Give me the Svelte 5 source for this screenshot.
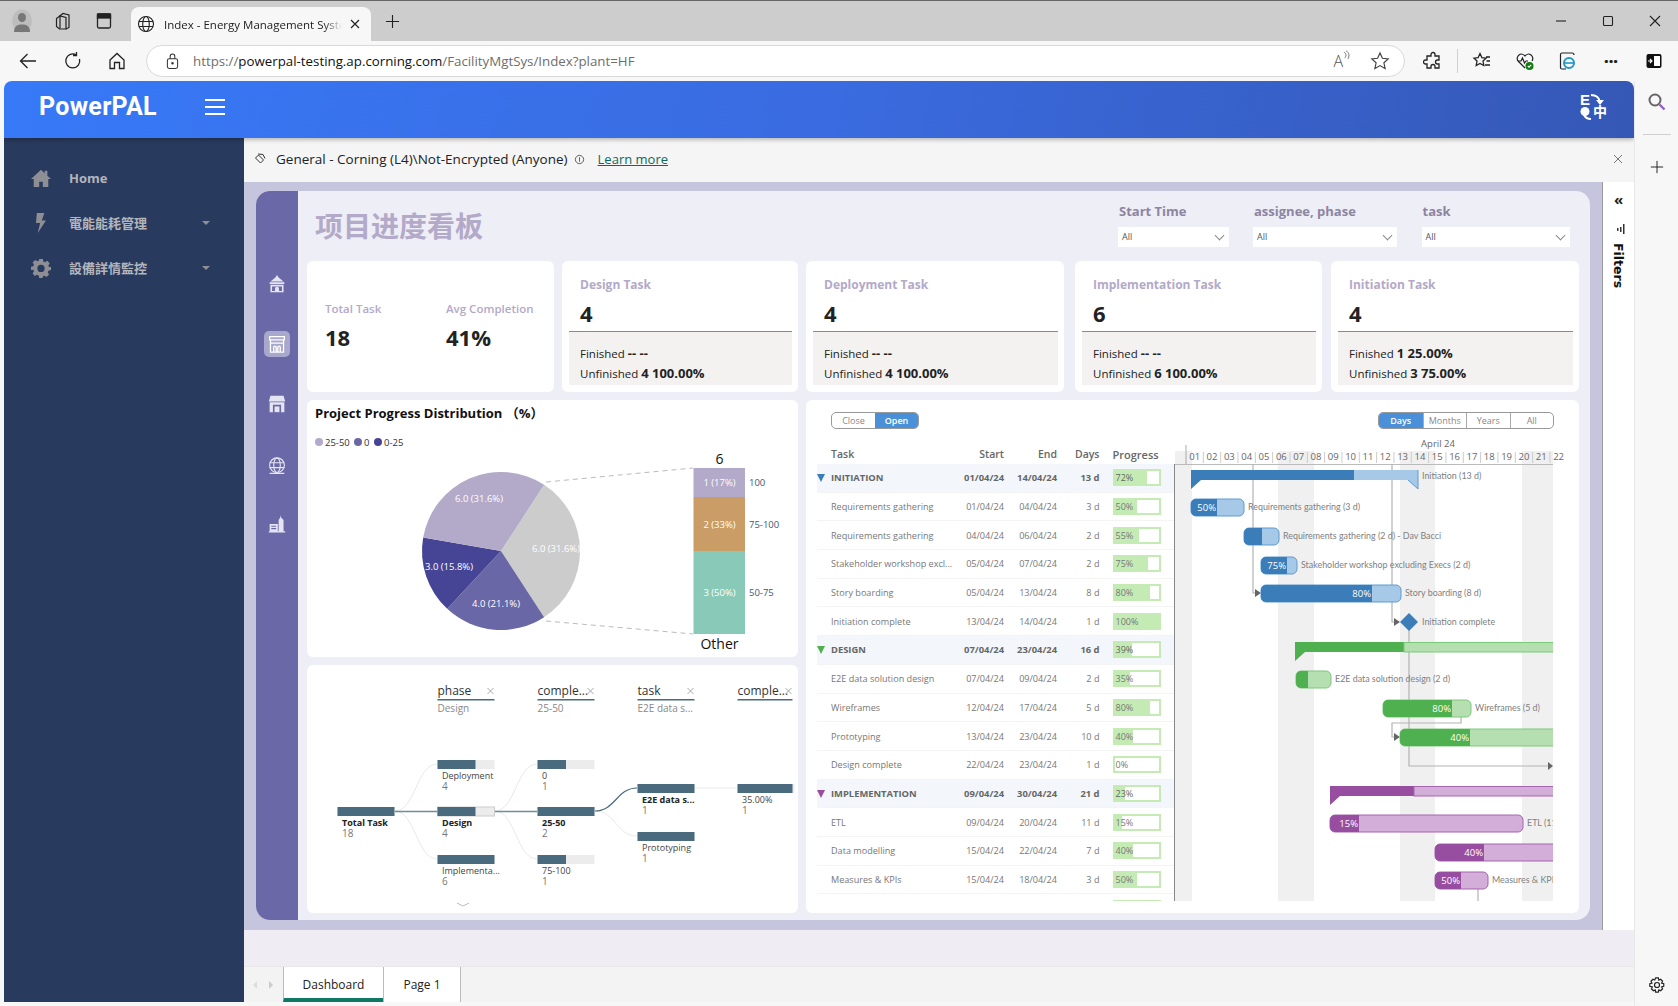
<script>
	const stats = [
		{ name: 'Design Task', total: 4, done: '-- --', open: '4 100.00%' },
		{ name: 'Deployment Task', total: 4, done: '-- --', open: '4 100.00%' },
		{ name: 'Implementation Task', total: 6, done: '-- --', open: '6 100.00%' },
		{ name: 'Initiation Task', total: 4, done: '1 25.00%', open: '3 75.00%' }
	];

	const rows = [
		{ task: 'INITIATION', start: '01/04/24', end: '14/04/24', days: '13 d', pct: 72, group: 'blue' },
		{ task: 'Requirements gathering', start: '01/04/24', end: '04/04/24', days: '3 d', pct: 50 },
		{ task: 'Requirements gathering', start: '04/04/24', end: '06/04/24', days: '2 d', pct: 55 },
		{ task: 'Stakeholder workshop excl...', start: '05/04/24', end: '07/04/24', days: '2 d', pct: 75 },
		{ task: 'Story boarding', start: '05/04/24', end: '13/04/24', days: '8 d', pct: 80 },
		{ task: 'Initiation complete', start: '13/04/24', end: '14/04/24', days: '1 d', pct: 100 },
		{ task: 'DESIGN', start: '07/04/24', end: '23/04/24', days: '16 d', pct: 39, group: 'green' },
		{ task: 'E2E data solution design', start: '07/04/24', end: '09/04/24', days: '2 d', pct: 35 },
		{ task: 'Wireframes', start: '12/04/24', end: '17/04/24', days: '5 d', pct: 80 },
		{ task: 'Prototyping', start: '13/04/24', end: '23/04/24', days: '10 d', pct: 40 },
		{ task: 'Design complete', start: '22/04/24', end: '23/04/24', days: '1 d', pct: 0 },
		{ task: 'IMPLEMENTATION', start: '09/04/24', end: '30/04/24', days: '21 d', pct: 23, group: 'purple' },
		{ task: 'ETL', start: '09/04/24', end: '20/04/24', days: '11 d', pct: 15 },
		{ task: 'Data modelling', start: '15/04/24', end: '22/04/24', days: '7 d', pct: 40 },
		{ task: 'Measures & KPIs', start: '15/04/24', end: '18/04/24', days: '3 d', pct: 50 },
		{ task: '', start: '', end: '', days: '', pct: 30 }
	];

	const blue = { dark: '#3a7db8', light: '#a5c9e6', edge: '#5d9bd3' };
	const green = { dark: '#4fb04f', light: '#b6dfb1', edge: '#7cc97a' };
	const purple = { dark: '#984ea0', light: '#d3aed9', edge: '#a765b0' };

	// chart coordinates are page pixels, the svg viewBox starts at 1174,440
	const bars = [
		{ x: 1191, x2: 1244, split: 1217, y: 499, c: blue, pct: '50%', label: 'Requirements gathering (3 d)' },
		{ x: 1244, x2: 1279, split: 1262, y: 528, c: blue, label: 'Requirements gathering (2 d) - Dav Bacci' },
		{ x: 1261, x2: 1297, split: 1287, y: 557, c: blue, pct: '75%', label: 'Stakeholder workshop excluding Execs (2 d)' },
		{ x: 1261, x2: 1401, split: 1372, y: 585, c: blue, pct: '80%', label: 'Story boarding (8 d)' },
		{ x: 1296, x2: 1331, split: 1308, y: 671, c: green, label: 'E2E data solution design (2 d)' },
		{ x: 1383, x2: 1471, split: 1452, y: 700, c: green, pct: '80%', label: 'Wireframes (5 d)' },
		{ x: 1400, x2: 1590, split: 1470, y: 729, c: green, pct: '40%' },
		{ x: 1330, x2: 1523, split: 1359, y: 815, c: purple, pct: '15%', label: 'ETL (11 d)' },
		{ x: 1435, x2: 1590, split: 1484, y: 844, c: purple, pct: '40%' },
		{ x: 1435, x2: 1488, split: 1461, y: 872, c: purple, pct: '50%', label: 'Measures & KPIs (3 d)' }
	];

	const dayW = 17.33;
	const days = Array.from({ length: 22 }, (_, i) => ({
		label: String(i + 1).padStart(2, '0'),
		x: 1186 + i * dayW
	}));
	const weekends = [
		[1175, 1192],
		[1278, 1314],
		[1400, 1435],
		[1522, 1553]
	];

	const pieC = { x: 501, y: 551, r: 79 };
	function arc(a0, a1) {
		const rad = Math.PI / 180;
		const p = (a) => `${pieC.x + pieC.r * Math.cos(a * rad)} ${pieC.y + pieC.r * Math.sin(a * rad)}`;
		return `M${pieC.x} ${pieC.y}L${p(a0)}A${pieC.r} ${pieC.r} 0 ${a1 - a0 > 180 ? 1 : 0} 1 ${p(a1)}Z`;
	}
	const slices = [
		{ d: arc(-56.9, 56.9), fill: '#cccccc', text: '6.0 (31.6%)', x: 556, y: 552 },
		{ d: arc(56.9, 132.9), fill: '#6a67a6', text: '4.0 (21.1%)', x: 496, y: 607 },
		{ d: arc(132.9, 189.8), fill: '#464494', text: '3.0 (15.8%)', x: 449, y: 570 },
		{ d: arc(189.8, 303.1), fill: '#b3a9c8', text: '6.0 (31.6%)', x: 479, y: 502 }
	];
	const stack = [
		{ y: 468, h: 29, fill: '#b3a9c8', text: '1 (17%)', side: '100' },
		{ y: 497, h: 54, fill: '#c99d65', text: '2 (33%)', side: '75-100' },
		{ y: 551, h: 83, fill: '#89c9b8', text: '3 (50%)', side: '50-75' }
	];

	const treeHeads = [
		{ x: 437.5, w: 57, name: 'phase', sub: 'Design' },
		{ x: 537.5, w: 57, name: 'comple...', sub: '25-50' },
		{ x: 637.5, w: 57, name: 'task', sub: 'E2E data s...' },
		{ x: 737.5, w: 55, name: 'comple...', sub: '' }
	];
	const nodes = [
		{ x: 337.5, y: 807, fill: 57, name: 'Total Task', n: 18, bold: true },
		{ x: 437.5, y: 760, fill: 38, name: 'Deployment', n: 4 },
		{ x: 437.5, y: 807, fill: 38, name: 'Design', n: 4, bold: true, picked: true },
		{ x: 437.5, y: 855, fill: 57, name: 'Implementa...', n: 6 },
		{ x: 537.5, y: 760, fill: 28.5, name: '0', n: 1 },
		{ x: 537.5, y: 807, fill: 57, name: '25-50', n: 2, bold: true },
		{ x: 537.5, y: 855, fill: 28.5, name: '75-100', n: 1 },
		{ x: 637.5, y: 784, fill: 57, name: 'E2E data s...', n: 1, bold: true },
		{ x: 637.5, y: 832, fill: 57, name: 'Prototyping', n: 1 },
		{ x: 737.5, y: 784, fill: 55, name: '35.00%', n: 1 }
	];
	const softLinks = [
		'M395 811C415 811 417 764 437 764',
		'M395 811C415 811 417 859 437 859',
		'M495 811C515 811 517 764 537 764',
		'M495 811C515 811 517 859 537 859',
		'M595 811C615 811 617 836 637 836',
		'M695 788H737'
	];
</script>

<div class="window">
	<div class="tabstrip">
		<svg class="ic avatar" viewBox="0 0 22 24">
			<ellipse cx="11" cy="12" rx="10" ry="11.5" fill="#bdbdbd" />
			<ellipse cx="11" cy="8.5" rx="4" ry="4.5" fill="#777" />
			<path d="M3 23c0-6 3.500-7.500 8-7.500s8 1.500 8 7.500z" fill="#777" />
		</svg>
		<svg class="ic wsp" viewBox="0 0 20 20" fill="none" stroke="#222" stroke-width="1.200">
			<path d="M7 5.500l4-3 6 1.500v12.500l-3 1.500" />
			<path d="M4.500 7.500l3.500-2.500 6 1.500v11.500h-6.500l-3-2.500z" />
			<path d="M8 5v12.500" />
		</svg>
		<svg class="ic vtabs" viewBox="0 0 20 20" fill="none" stroke="#222" stroke-width="1.300">
			<rect x="3.500" y="3" width="13" height="14" rx="1.500" />
			<rect x="3.500" y="3" width="13" height="4" fill="#222" />
		</svg>
		<div class="tab">
			<svg class="globe" viewBox="0 0 18 18" fill="none" stroke="#222" stroke-width="1.100">
				<circle cx="9" cy="9" r="7.500" />
				<ellipse cx="9" cy="9" rx="3.300" ry="7.500" />
				<path d="M2 6.500h14M2 11.500h14" />
			</svg>
			<span class="tab-title">Index - Energy Management System</span>
			<svg class="tab-x" viewBox="0 0 10 10" stroke="#222" stroke-width="1.200"><path d="M1 1l8 8M9 1l-8 8" /></svg>
		</div>
		<svg class="ic newtab" viewBox="0 0 16 16" stroke="#222" stroke-width="1.200"><path d="M8 1v14M1 8h14" /></svg>
		<div class="winctl">
			<svg viewBox="0 0 12 12" stroke="#222" stroke-width="1.100"><path d="M1 6h10" /></svg>
			<svg viewBox="0 0 12 12" stroke="#222" stroke-width="1.100" fill="none"><rect x="1.500" y="1.500" width="9" height="9" rx="1" /></svg>
			<svg viewBox="0 0 12 12" stroke="#222" stroke-width="1.100"><path d="M1 1l10 10M11 1l-10 10" /></svg>
		</div>
	</div>

	<div class="toolbar">
		<svg class="ic back" viewBox="0 0 20 20" fill="none" stroke="#222" stroke-width="1.300"><path d="M18 10H2.500M9.500 3l-7 7 7 7" /></svg>
		<svg class="ic reload" viewBox="0 0 20 20" fill="none" stroke="#222" stroke-width="1.300"><path d="M16.500 8a7 7 0 1 1-3-4M13.500 1v3.500H10" /></svg>
		<svg class="ic home" viewBox="0 0 20 20" fill="none" stroke="#222" stroke-width="1.300"><path d="M3 9l7-6.500L17 9v8.500h-4.500v-6h-5v6H3z" /></svg>
		<div class="urlbar">
			<svg class="lock" viewBox="0 0 14 18" fill="none" stroke="#333" stroke-width="1.100">
				<rect x="1.500" y="6" width="11" height="10.500" rx="2" />
				<path d="M4.500 6V3.500a2.500 2.500 0 0 1 5 0V6" />
				<circle cx="7" cy="11" r=".8" fill="#333" />
			</svg>
			<span class="url"><i>https://</i>powerpal-testing.ap.corning.com<i>/FacilityMgtSys/Index?plant=HF</i></span>
			<span class="read">A<svg viewBox="0 0 8 12" fill="none" stroke="#555" stroke-width=".9"><path d="M1 2c3 1.500 3 5 1 7M3.500 .5c4 2.500 4 7 2 9.500" /></svg></span>
			<svg class="star" viewBox="0 0 20 20" fill="none" stroke="#444" stroke-width="1.200"><path d="M10 2l2.400 5.300 5.800.6-4.300 3.900 1.200 5.700-5.100-2.900-5.100 2.900 1.200-5.700-4.300-3.900 5.800-.6z" /></svg>
		</div>
		<div class="tools">
			<svg viewBox="0 0 20 20" fill="none" stroke="#222" stroke-width="1.300"><path d="M8 3.500a2 2 0 0 1 4 0V5h4v4h-1.500a2 2 0 0 0 0 4H16v4h-4v-1.500a2 2 0 0 0-4 0V17H4v-4H2.500a2 2 0 0 1 0-4H4V5h4z" /></svg>
			<span class="sep"></span>
			<svg viewBox="0 0 20 20" fill="none" stroke="#222" stroke-width="1.300"><path d="M8 2.500l1.900 4.200 4.100.5-3 2.900.8 4.400L8 12.400l-3.800 2.100.8-4.400-3-2.900 4.100-.5zM14 6h4M14.500 10H18M13 14h5" /></svg>
			<svg viewBox="0 0 20 20" fill="none" stroke="#222" stroke-width="1.200">
				<path d="M10 17L3 10a4 4 0 0 1 7-5 4 4 0 0 1 7 5" />
				<path d="M3 10h3l1.500-3 2 5 1.500-2h2" />
				<circle cx="14.500" cy="15" r="4" fill="#107c10" stroke="none" />
				<path d="M12.800 15l1.200 1.200 2.200-2.300" stroke="#fff" />
			</svg>
			<svg viewBox="0 0 20 20" fill="none" stroke="#222" stroke-width="1.200">
				<path d="M8 18H4a1.500 1.500 0 0 1-1.500-1.500v-13A1.500 1.500 0 0 1 4 2h10a2 2 0 0 1 2 2" />
				<circle cx="11" cy="12" r="5" stroke="#2196c8" stroke-width="2" />
				<path d="M7 12h8" stroke="#2196c8" stroke-width="1.600" />
			</svg>
			<span class="dots">···</span>
			<svg viewBox="0 0 20 20"><rect x="2.500" y="3" width="15" height="14" rx="2" fill="#111" /><rect x="10" y="5" width="6" height="10" fill="#fff" /><path d="M4 10h4M6 8l2 2-2 2" stroke="#fff" fill="none" stroke-width="1.100" /></svg>
		</div>
	</div>

	<div class="shell">
		<div class="app">
			<header class="top">
				<span class="brand">PowerPAL</span>
				<span class="burger"><i></i><i></i><i></i></span>
				<svg class="lang" viewBox="0 0 28 27">
					<text x="0" y="11.500" class="lang-e">E</text>
					<path d="M11 2c5 0 8 2 9 7" fill="none" stroke="#fff" stroke-width="2" />
					<path d="M16 7h8l-4 5z" fill="#fff" />
					<circle cx="5" cy="18.500" r="4.500" fill="#fff" />
					<path d="M4 22c1.500 3 3.500 4 7 4" fill="none" stroke="#fff" stroke-width="2" />
					<text x="13" y="24" class="lang-zh">中</text>
				</svg>
			</header>
			<div class="under">
				<nav class="side">
					<div class="nav-item">
						<svg viewBox="0 0 22 20" fill="#8d8f95"><path d="M11 1L0 11h3v9h6v-6h4v6h6v-9h3l-4-3.600V2h-3v2.700z" /></svg>
						<span>Home</span>
					</div>
					<div class="nav-item">
						<svg viewBox="0 0 22 24" fill="#8d8f95"><path d="M6 0h9l-3 9h5L7 24l3-12H5z" /></svg>
						<span>電能能耗管理</span>
						<b class="caret"></b>
					</div>
					<div class="nav-item">
						<svg viewBox="0 0 22 22" fill="#8d8f95"><path d="M9 1h4l.6 2.800 1.800.8 2.400-1.500 2.800 2.800-1.500 2.400.8 1.800L22 9.700v3.600l-2.800.6-.8 1.800 1.500 2.400-2.800 2.800-2.400-1.500-1.800.8L13 22H9l-.6-2.800-1.800-.8-2.400 1.500-2.400-2.800 1.500-2.400-.8-1.800L0 13.300V9.700l2.500-.6.8-1.800-1.500-2.400 2.800-2.800 2.400 1.500 1.800-.8zM11 7.500a4 4 0 1 0 0 8 4 4 0 0 0 0-8z" /></svg>
						<span>設備詳情監控</span>
						<b class="caret"></b>
					</div>
				</nav>
				<main class="main">
					<div class="notice">
						<svg class="tagicon" viewBox="0 0 12 12" fill="none" stroke="#333" stroke-width="1"><path d="M1.500 5l3-3 5 5-3 3zM4 1l5 .5 2 4" /></svg>
						<span>General - Corning (L4)\Not-Encrypted (Anyone)</span>
						<svg class="info" viewBox="0 0 12 12" fill="none" stroke="#444" stroke-width=".9"><circle cx="6" cy="6" r="4.500" /><path d="M6 3.500v5" /></svg>
						<a href="#learn">Learn more</a>
						<svg class="closex" viewBox="0 0 10 10" stroke="#666" stroke-width=".9"><path d="M1 1l8 8M9 1l-8 8" /></svg>
					</div>
					<div class="work">
						<div class="band">
							<div class="panel">
								<div class="rail">
									<svg viewBox="0 0 22 22" fill="#e4e4f2"><path d="M11 0l2 3 6 5H3l6-5zM2 9h18v2H2zM3 12h16v9H3zm2 2v5.500h3.500V17a2.500 2.500 0 0 1 5 0v2.500H17V14z" fill-rule="evenodd" /></svg>
									<span class="rail-on">
										<svg viewBox="0 0 22 22" fill="none" stroke="#fff" stroke-width="1.600"><path d="M2 2h18v4H2zM3 6v15h16V6M3 10h16M7 21v-6a1.500 1.500 0 0 1 3 0v6M12 21v-6a1.500 1.500 0 0 1 3 0v6" /></svg>
									</span>
									<svg viewBox="0 0 22 22" fill="#e4e4f2"><path d="M3 1h16l2 7H1zM2 9h18v12H2zm4 3v9h10v-9z" fill-rule="evenodd" /><rect x="8" y="14" width="6" height="7" /></svg>
									<svg class="r-globe" viewBox="0 0 22 22" fill="none" stroke="#e4e4f2" stroke-width="1.400"><circle cx="11" cy="10" r="9" /><ellipse cx="11" cy="10" rx="4" ry="9" /><path d="M2 7h18M2 13h18M2 20h18" /></svg>
									<svg viewBox="0 0 22 22" fill="#e4e4f2"><path d="M15 0l1 3 3 3v14h-6V6l2-3zM2 11h10v9H2zm2 2v1.500h6V13zm0 3v1.500h6V16zM1 20h20v1.500H1z" fill-rule="evenodd" /></svg>
								</div>
								<div class="content">
									<div class="head">
										<h1>项目进度看板</h1>
										<div class="slicer s1"><label for="s1">Start Time</label><div id="s1" class="select">All<i></i></div></div>
										<div class="slicer s2"><label for="s2">assignee, phase</label><div id="s2" class="select">All<i></i></div></div>
										<div class="slicer s3"><label for="s3">task</label><div id="s3" class="select">All<i></i></div></div>
									</div>
									<div class="stats">
										<div class="card totals">
											<div>
												<h4>Total Task</h4>
												<strong>18</strong>
											</div>
											<div>
												<h4>Avg Completion</h4>
												<strong>41%</strong>
											</div>
										</div>
										{#each stats as s}
											<div class="card stat">
												<h3>{s.name}</h3>
												<strong>{s.total}</strong>
												<div class="split">
													<p>Finished <b>{s.done}</b></p>
													<p>Unfinished <b>{s.open}</b></p>
												</div>
											</div>
										{/each}
									</div>
									<div class="lower">
										<div class="leftcol">
											<section class="card piecard">
												<h2>Project Progress Distribution （%）</h2>
												<svg class="piesvg" viewBox="307 430 491 227">
													<g class="legend">
														<circle cx="319" cy="442" r="4" fill="#b3a9c8" />
														<text x="325" y="445.500">25-50</text>
														<circle cx="358" cy="442" r="4" fill="#6a67a6" />
														<text x="364" y="445.500">0</text>
														<circle cx="378" cy="442" r="4" fill="#464494" />
														<text x="384" y="445.500">0-25</text>
													</g>
													{#each slices as s}
														<path d={s.d} fill={s.fill} />
													{/each}
													{#each slices as s}
														<text class="pie-label" x={s.x} y={s.y} text-anchor="middle">{s.text}</text>
													{/each}
													<path d="M546 482L693 468M546 621L693 634" stroke="#bbb" stroke-dasharray="5 4" fill="none" />
													{#each stack as b}
														<rect x="693.500" y={b.y} width="51.500" height={b.h} fill={b.fill} />
														<text class="pie-label" x="719.500" y={b.y + b.h / 2 + 3.500} text-anchor="middle">{b.text}</text>
														<text class="side-label" x="749" y={b.y + b.h / 2 + 3.500}>{b.side}</text>
													{/each}
													<text class="stack-cap" x="719.500" y="464" text-anchor="middle">6</text>
													<text class="stack-cap" x="719.500" y="649" text-anchor="middle">Other</text>
												</svg>
											</section>
											<section class="card treecard">
												<svg viewBox="307 665 490 248">
													{#each treeHeads as h}
														<text class="th" x={h.x} y="695">{h.name}</text>
														<path d="M{h.x + h.w - 7} 688l6 6M{h.x + h.w - 1} 688l-6 6" stroke="#aaa" fill="none" />
														<rect x={h.x} y="699" width={h.w} height="1.500" fill="#4a6a7e" />
														<text class="ts" x={h.x} y="712">{h.sub}</text>
													{/each}
													{#each softLinks as d}
														<path {d} fill="none" stroke="#e9e9e9" />
													{/each}
													<path d="M395 811.500H437M495 811.500H537" stroke="#6f8b9c" stroke-width="1.600" />
													<path d="M595 811C615 811 617 788 637 788" stroke="#4a6a7e" stroke-width="1.200" fill="none" />
													{#each nodes as n}
														<rect x={n.x} y={n.y} width="57" height="9" fill="#ececec" stroke={n.picked ? '#ccc' : 'none'} />
														<rect x={n.x} y={n.y} width={n.fill} height="9" fill="#4a6a7e" />
														<text class="nn" class:nb={n.bold} x={n.x + 4.500} y={n.y + 18.500}>{n.name}</text>
														<text class="nv" x={n.x + 4.500} y={n.y + 30}>{n.n}</text>
													{/each}
													<path d="M457 903l6 3 6-3" fill="none" stroke="#bbb" />
												</svg>
											</section>
										</div>
										<section class="card gantt">
											<div class="gbar">
												<div class="seg seg-a"><span>Close</span><span class="on">Open</span></div>
												<div class="seg seg-b"><span class="on">Days</span><span>Months</span><span>Years</span><span>All</span></div>
											</div>
											<div class="gbody">
												<div class="gtable">
													<div class="grow ghead">
														<span class="t">Task</span><span class="d">Start</span><span class="d">End</span><span class="dd">Days</span><span class="prog">Progress</span>
													</div>
													{#each rows as r}
														<div class="grow {r.group ?? ''}" class:groupr={r.group}>
															<span class="t">{r.task}</span>
															<span class="d">{r.start}</span>
															<span class="d">{r.end}</span>
															<span class="dd">{r.days}</span>
															<span class="pbox" style="--p:{r.pct}%">{r.pct}%</span>
														</div>
													{/each}
												</div>
												<svg class="gchart" viewBox="1174 440 391 461">
													<defs>
														<clipPath id="gclip"><rect x="1174" y="440" width="379" height="461" /></clipPath>
													</defs>
													{#each weekends as w}
														<rect x={w[0]} y="451" width={w[1] - w[0]} height="450" fill="#f0f0f0" />
													{/each}
													<text class="month" x="1438" y="447" text-anchor="middle">April 24</text>
													<path d="M1186 445V464" stroke="#aaa" />
													{#each days as d}
														<path d="M{d.x + dayW} 452V463" stroke="#ccc" />
														<text class="day" x={d.x + dayW / 2} y="460" text-anchor="middle">{d.label}</text>
													{/each}
													<path d="M1174 464.500H1553" stroke="#bbb" />
													<path d="M1174.500 464V901" stroke="#888" />

													<g fill="none" stroke="#b3b3b3" stroke-width="1.200">
														<path d="M1253 464V593H1256" />
														<path d="M1392 464V622H1395" />
														<path d="M1409 630V766H1549" />
														<path d="M1461 717V723H1392V737H1395" />
														<path d="M1478 889V901" />
													</g>
													<g fill="#666">
														<path d="M1255 589l6 4-6 4z" />
														<path d="M1394 618l6 4-6 4z" />
														<path d="M1394 733l6 4-6 4z" />
														<path d="M1548 762l5 4-5 4z" />
													</g>

													<g clip-path="url(#gclip)">
														<path d="M1191 470H1354V480H1201L1191 489Z" fill={blue.dark} />
														<path d="M1354 470H1418V489L1408 480H1354Z" fill={blue.light} />
														<path d="M1418 470V489L1408 480" fill="none" stroke={blue.edge} />
														<path d="M1295 642H1404V652H1305L1295 661Z" fill={green.dark} />
														<rect x="1404" y="642.500" width="160" height="9.500" fill={green.light} stroke={green.edge} />
														<path d="M1330 786H1414V796H1340L1330 805Z" fill={purple.dark} />
														<rect x="1414" y="786.500" width="160" height="9.500" fill={purple.light} stroke={purple.edge} />
														{#each bars as b}
															<rect x={b.x} y={b.y} width={b.x2 - b.x} height="17" rx="5" fill={b.c.light} stroke={b.c.edge} />
															<path d="M{b.split} {b.y}H{b.x + 5}a5 5 0 0 0-5 5v7a5 5 0 0 0 5 5H{b.split}Z" fill={b.c.dark} />
															{#if b.pct}
																<text class="bar-pct" x={b.split - 1} y={b.y + 12} text-anchor="end">{b.pct}</text>
															{/if}
															{#if b.label}
																<text class="bar-label" x={b.x2 + 4} y={b.y + 11}>{b.label}</text>
															{/if}
														{/each}
														<path d="M1409 613l9 9-9 9-9-9z" fill={blue.dark} />
														<text class="bar-label" x="1422" y="625">Initiation complete</text>
														<text class="bar-label" x="1422" y="479">Initiation (13 d)</text>
													</g>
												</svg>
											</div>
										</section>
									</div>
								</div>
							</div>
						</div>
						<aside class="filters">
							<span class="chev">«</span>
							<svg viewBox="0 0 8 12" fill="#333"><rect x="0" y="5" width="1.500" height="3" /><rect x="3" y="4" width="1.500" height="5" /><rect x="6" y="1" width="1.500" height="10" /></svg>
							<span class="ftext">Filters</span>
						</aside>
					</div>
					<div class="gapbar"></div>
					<div class="pages">
						<span class="tri l"></span><span class="tri r"></span>
						<span class="page active">Dashboard</span>
						<span class="page">Page 1</span>
					</div>
				</main>
			</div>
		</div>
		<div class="edge">
			<svg class="e-search" viewBox="0 0 20 20" fill="none"><circle cx="8" cy="8" r="5.500" stroke="#666" stroke-width="2" /><path d="M12.500 12.500l5 5" stroke="#9060c8" stroke-width="2.400" /></svg>
			<span class="e-line"></span>
			<svg class="e-plus" viewBox="0 0 16 16" stroke="#222" stroke-width="1.100"><path d="M8 1v14M1 8h14" /></svg>
			<svg class="e-gear" viewBox="0 0 20 20" fill="none" stroke="#222" stroke-width="1.300"><circle cx="10" cy="10" r="2.800" /><path d="M8.500 2h3l.5 2.500 2-.9 2.200 2.200-1.100 2 2.400.7v3l-2.400.7 1.100 2-2.200 2.200-2-.9-.5 2.500h-3l-.5-2.500-2 .9-2.200-2.200 1.100-2L2 11.500v-3l2.400-.7-1.100-2 2.200-2.200 2 .9z" /></svg>
		</div>
	</div>
</div>

<style>
	:global(body) {
		margin: 0;
		background: #f7f7f7;
	}
	.window {
		width: 1678px;
		height: 1006px;
		overflow: hidden;
		display: flex;
		flex-direction: column;
		font-family: 'Open Sans', 'Noto Sans CJK SC', sans-serif;
		color: #222;
		background: #f7f7f7;
	}
	.ic {
		flex: none;
		display: block;
	}

	/* browser chrome */
	.tabstrip {
		height: 40px;
		border-top: 1px solid #666;
		background: #cdcdcd;
		display: flex;
		align-items: center;
		position: relative;
	}
	.avatar {
		width: 22px;
		height: 24px;
		margin-left: 11px;
	}
	.wsp {
		width: 20px;
		height: 20px;
		margin-left: 19px;
	}
	.vtabs {
		width: 20px;
		height: 20px;
		margin-left: 22px;
	}
	.tab {
		width: 240px;
		height: 34px;
		margin: 6px 0 0 17px;
		background: #f7f7f7;
		border-radius: 8px 8px 0 0;
		display: flex;
		align-items: center;
		box-sizing: border-box;
		padding-left: 6px;
	}
	.globe {
		width: 18px;
		height: 18px;
	}
	.tab-title {
		width: 178px;
		margin-left: 9px;
		font-size: 11.500px;
		white-space: nowrap;
		overflow: hidden;
		-webkit-mask-image: linear-gradient(90deg, #000 90%, transparent);
		mask-image: linear-gradient(90deg, #000 90%, transparent);
	}
	.tab-x {
		width: 10px;
		height: 10px;
		margin-left: 8px;
	}
	.newtab {
		width: 15px;
		height: 15px;
		margin-left: 14px;
	}
	.winctl {
		margin-left: auto;
		display: flex;
		gap: 35px;
		padding-right: 17px;
	}
	.winctl svg {
		width: 12px;
		height: 12px;
	}
	.toolbar {
		height: 40px;
		display: flex;
		align-items: center;
		background: #f7f7f7;
	}
	.back {
		width: 20px;
		height: 20px;
		margin-left: 18px;
	}
	.reload {
		width: 20px;
		height: 20px;
		margin-left: 25px;
	}
	.home {
		width: 20px;
		height: 20px;
		margin-left: 24px;
	}
	.urlbar {
		width: 1259px;
		height: 32px;
		box-sizing: border-box;
		margin-left: 19px;
		border: 1.500px solid #d9d9d9;
		border-radius: 16px;
		background: #fff;
		display: flex;
		align-items: center;
		padding-left: 19px;
	}
	.lock {
		width: 13px;
		height: 17px;
	}
	.url {
		margin-left: 14px;
		font-size: 13.300px;
		color: #111;
		white-space: nowrap;
	}
	.url i {
		font-style: normal;
		color: #6e6e6e;
	}
	.read {
		margin-left: auto;
		font-size: 16px;
		font-weight: 300;
		color: #555;
		display: flex;
		align-items: flex-start;
	}
	.read svg {
		width: 7px;
		height: 11px;
	}
	.star {
		width: 20px;
		height: 20px;
		margin: 0 14px 0 20px;
	}
	.tools {
		display: flex;
		align-items: center;
		margin-left: 18px;
		gap: 23px;
	}
	.tools svg {
		width: 20px;
		height: 20px;
		flex: none;
	}
	.tools .sep {
		width: 1px;
		height: 24px;
		background: #d0d0d0;
		margin: 0 -9px;
	}
	.dots {
		width: 20px;
		text-align: center;
		font-size: 16px;
		font-weight: 800;
		line-height: 16px;
	}

	.shell {
		flex: 1;
		display: flex;
		min-height: 0;
		padding-left: 4px;
	}
	.app {
		width: 1630px;
		height: 921px;
		display: flex;
		flex-direction: column;
		border-radius: 8px 8px 0 0;
		overflow: hidden;
	}
	.top {
		height: 57px;
		flex: none;
		box-sizing: border-box;
		padding-bottom: 6px;
		background: linear-gradient(100deg, #3779f7 0%, #3a6be0 50%, #3558b6 100%);
		display: flex;
		align-items: center;
		box-shadow: 0 2px 4px rgba(0, 0, 0, 0.25);
		position: relative;
		z-index: 1;
		color: #fff;
	}
	.brand {
		margin-left: 35px;
		font: 700 25px Roboto, sans-serif;
		letter-spacing: 0.3px;
	}
	.burger {
		margin-left: 48px;
		width: 20px;
		display: flex;
		flex-direction: column;
		gap: 5px;
	}
	.burger i {
		height: 2px;
		background: #fff;
	}
	.lang {
		width: 28px;
		height: 27px;
		margin-left: auto;
		margin-right: 26px;
		overflow: visible;
	}
	.lang-e {
		font: 700 15px 'Liberation Sans', sans-serif;
		fill: #fff;
	}
	.lang-zh {
		font: 700 14px 'Noto Sans CJK SC', sans-serif;
		fill: #fff;
	}

	.under {
		flex: 1;
		display: flex;
		min-height: 0;
	}
	.side {
		width: 240px;
		flex: none;
		background: #293a5f;
		padding-top: 29px;
		display: flex;
		flex-direction: column;
		gap: 23px;
	}
	.nav-item {
		height: 22px;
		display: flex;
		align-items: center;
		position: relative;
		color: #b3b5bb;
		font-size: 13px;
		font-weight: 700;
	}
	.nav-item svg {
		width: 20px;
		height: 20px;
		margin: 0 18px 0 27px;
		flex: none;
	}
	.nav-item span {
		font-family: 'Open Sans', 'Noto Sans CJK TC', sans-serif;
		line-height: 20px;
		margin-top: -1px;
	}
	.caret {
		margin-left: auto;
		margin-right: 34px;
		border: 4px solid transparent;
		border-top-color: #8d8f95;
		border-bottom: 0;
	}

	.main {
		flex: 1;
		min-width: 0;
		display: flex;
		flex-direction: column;
	}
	.notice {
		height: 44px;
		flex: none;
		background: #f5f5f5;
		display: flex;
		align-items: center;
		font-size: 13.500px;
		padding-bottom: 2px;
		box-sizing: border-box;
	}
	.tagicon {
		width: 12px;
		height: 12px;
		margin: 0 10px 0 10px;
	}
	.info {
		width: 11px;
		height: 11px;
		margin: 0 13px 0 6px;
	}
	.notice a {
		color: #0b6a5b;
		text-decoration: underline;
		font-size: 13px;
	}
	.closex {
		width: 10px;
		height: 10px;
		margin-left: auto;
		margin-right: 11px;
	}
	.work {
		height: 748px;
		flex: none;
		display: flex;
	}
	.band {
		flex: 1;
		background: #c5c5dd;
		padding: 9px 12px 10px;
		min-width: 0;
	}
	.panel {
		height: 100%;
		background: #edeef6;
		border-radius: 14px;
		display: flex;
		overflow: hidden;
	}
	.rail {
		width: 41.500px;
		flex: none;
		background: #6b68a8;
		display: flex;
		flex-direction: column;
		align-items: center;
		padding-top: 83px;
		box-sizing: border-box;
		gap: 40px;
	}
	.rail > svg {
		width: 18px;
		height: 20px;
		display: block;
	}
	.rail > .r-globe {
		margin: 2px 0 -2px;
	}
	.rail-on {
		width: 26px;
		height: 26px;
		border-radius: 5px;
		background: #a8a7cc;
		display: flex;
		align-items: center;
		justify-content: center;
		margin: -3px 0;
	}
	.rail-on svg {
		width: 18px;
		height: 18px;
	}
	.content {
		flex: 1;
		min-width: 0;
		padding-left: 9.500px;
	}
	.head {
		height: 70px;
		display: flex;
		position: relative;
	}
	h1 {
		margin: 15px 0 0 8px;
		font: 700 28px/38px 'Noto Sans CJK SC', sans-serif;
		color: #b3a9c8;
		width: 803px;
	}
	.slicer {
		padding-top: 11px;
	}
	.slicer label {
		display: block;
		height: 25px;
		line-height: 18px;
		padding-left: 1px;
		font-size: 13px;
		font-weight: 700;
		color: #8c85a0;
	}
	.select {
		height: 20px;
		background: #fff;
		font-size: 9px;
		line-height: 20px;
		padding-left: 4px;
		color: #555;
		position: relative;
		box-sizing: border-box;
	}
	.select i {
		position: absolute;
		right: 6px;
		top: 5px;
		width: 6px;
		height: 6px;
		border: solid #888;
		border-width: 0 1px 1px 0;
		transform: rotate(45deg);
	}
	.s1 {
		width: 111px;
		margin-right: 24px;
	}
	.s2 {
		width: 144px;
		margin-right: 24.500px;
	}
	.s3 {
		width: 148px;
	}

	.card {
		background: #fff;
		border-radius: 6px;
		box-sizing: border-box;
	}
	.stats {
		height: 131px;
		display: flex;
		gap: 8px;
	}
	.totals {
		width: 247px;
		display: flex;
		padding: 38px 0 0 18px;
	}
	.totals > div {
		width: 121px;
		flex: none;
	}
	.totals h4 {
		margin: 0;
		font-size: 11.500px;
		line-height: 20px;
		font-weight: 600;
		color: #b3a9c8;
		white-space: nowrap;
	}
	.totals strong {
		display: block;
		font-size: 22px;
		line-height: 30px;
		margin-top: 3px;
	}
	.stat {
		width: 236px;
		padding: 15px 6px 0 7px;
	}
	.stat:nth-child(3) {
		width: 258px;
	}
	.stat:nth-child(4) {
		width: 247px;
		margin-left: 3px;
	}
	.stat:nth-child(5) {
		width: 248px;
		margin-left: 1px;
	}
	.stat h3 {
		margin: 0;
		padding-left: 11px;
		font-size: 12px;
		line-height: 18px;
		font-weight: 700;
		color: #b3a9c8;
	}
	.stat strong {
		display: block;
		height: 32px;
		padding-left: 11px;
		margin-top: 5px;
		font-size: 22px;
		line-height: 28px;
		border-bottom: 1px solid #8a8a8a;
		box-sizing: content-box;
	}
	.split {
		height: 53px;
		background: #f3f2f1;
		padding: 11px 0 0 11px;
		box-sizing: border-box;
	}
	.split p {
		margin: 0;
		height: 20px;
		font-size: 11.500px;
		line-height: 20px;
		white-space: nowrap;
	}
	.split b {
		font-size: 13px;
	}

	.lower {
		margin-top: 8px;
		display: flex;
		gap: 8px;
		height: 513px;
	}
	.leftcol {
		width: 491px;
		display: flex;
		flex-direction: column;
		gap: 8px;
	}
	.piecard {
		height: 257px;
	}
	.piecard h2 {
		margin: 0;
		height: 30px;
		padding: 4px 0 0 8px;
		box-sizing: border-box;
		font-size: 13px;
		line-height: 18px;
		font-weight: 700;
		color: #111;
	}
	.piesvg {
		display: block;
		width: 491px;
		height: 227px;
	}
	.legend text {
		font-size: 9.500px;
		fill: #333;
	}
	.pie-label {
		font-size: 9.500px;
		fill: #fff;
	}
	.side-label {
		font-size: 9.500px;
		fill: #3c5a78;
	}
	.stack-cap {
		font-size: 14px;
		fill: #111;
	}
	.treecard {
		height: 248px;
	}
	.treecard svg {
		display: block;
		width: 490px;
		height: 248px;
	}
	.th {
		font-size: 12px;
		fill: #333;
	}
	.ts {
		font-size: 10px;
		fill: #888;
	}
	.nn {
		font-size: 9px;
		fill: #444;
	}
	.nb {
		font-weight: 700;
		fill: #222;
	}
	.nv {
		font-size: 10px;
		fill: #777;
	}

	.gantt {
		width: 773px;
		overflow: hidden;
	}
	.gbar {
		height: 40px;
		padding: 12px 25px 0 25px;
		box-sizing: border-box;
		display: flex;
		justify-content: space-between;
	}
	.seg {
		height: 17px;
		display: flex;
		border: 1px solid #999;
		border-radius: 5px;
		overflow: hidden;
		box-sizing: border-box;
		font-size: 9px;
		line-height: 15px;
		color: #888;
		text-align: center;
	}
	.seg span {
		box-sizing: border-box;
	}
	.seg span + span {
		border-left: 1px solid #aaa;
	}
	.seg .on {
		background: #4a90d9;
		color: #fff;
		font-weight: 600;
		border: 0;
	}
	.seg-a span {
		width: 43px;
	}
	.seg-b span {
		width: 43.500px;
	}
	.gbody {
		display: flex;
		height: 461px;
		padding-left: 11px;
	}
	.gtable {
		width: 357px;
		flex: none;
		overflow: hidden;
		padding-top: 4px;
		box-sizing: border-box;
		font-size: 9.100px;
		color: #777;
	}
	.grow {
		height: 28.700px;
		display: flex;
		align-items: center;
		border-bottom: 1px solid #f4f4f4;
		box-sizing: border-box;
		white-space: nowrap;
		position: relative;
	}
	.ghead {
		height: 20px;
		font-size: 10.500px;
		font-weight: 600;
		color: #666;
		border: 0;
	}
	.groupr {
		background: #f3f6fb;
		font-weight: 700;
		color: #666;
		font-size: 9.400px;
	}
	.groupr::before {
		content: '';
		position: absolute;
		left: 0;
		top: 10px;
		border: 4px solid transparent;
		border-top: 8px solid #3a7db8;
		border-bottom: 0;
	}
	.green::before {
		border-top-color: #4fb04f;
	}
	.purple::before {
		border-top-color: #984ea0;
	}
	.t {
		width: 120px;
		margin-left: 14px;
		flex: none;
	}
	.d {
		width: 53px;
		flex: none;
		text-align: right;
	}
	.dd {
		width: 42.500px;
		flex: none;
		text-align: right;
	}
	.prog {
		margin-left: 13px;
		font-size: 11px;
	}
	.pbox {
		width: 48px;
		height: 17px;
		margin-left: 13px;
		flex: none;
		box-sizing: border-box;
		border: 2px solid #c5ebb5;
		background: linear-gradient(90deg, #c5ebb5 var(--p), #fff 0);
		font-size: 9px;
		line-height: 13px;
		padding-left: 1px;
		font-weight: 400;
	}
	.gchart {
		display: block;
		width: 391px;
		height: 461px;
		flex: none;
	}
	.month,
	.day {
		font-size: 9.500px;
		fill: #666;
	}
	.bar-label {
		font-family: Lato, sans-serif;
		font-size: 8.900px;
		fill: #808080;
	}
	.bar-pct {
		font-size: 9.500px;
		fill: #fff;
	}

	.filters {
		width: 32px;
		flex: none;
		background: #fff;
		border-left: 1px solid #999;
		box-sizing: border-box;
		display: flex;
		flex-direction: column;
		align-items: center;
	}
	.chev {
		margin-top: 7px;
		font-size: 15px;
		line-height: 20px;
		font-weight: 700;
	}
	.filters svg {
		width: 8px;
		height: 12px;
		margin-top: 14px;
		align-self: flex-end;
		margin-right: 9px;
	}
	.ftext {
		margin-top: 8px;
		writing-mode: vertical-rl;
		font: 600 12.500px 'DejaVu Sans', sans-serif;
		color: #111;
	}
	.gapbar {
		height: 36px;
		flex: none;
		background: #efedf3;
	}
	.pages {
		height: 36px;
		flex: none;
		background: #f3f3f3;
		border-top: 1px solid #e8e8e8;
		display: flex;
		box-sizing: border-box;
		font-size: 12px;
		align-items: stretch;
		padding-left: 5px;
	}
	.tri {
		align-self: center;
		width: 0;
		height: 0;
		border: 4px solid transparent;
		margin-right: 12px;
	}
	.tri.l {
		border-right-color: #ddd;
	}
	.tri.r {
		border-left-color: #ccc;
		margin-right: 6px;
	}
	.page {
		background: #fff;
		border-left: 1px solid #bbb;
		display: flex;
		align-items: center;
		justify-content: center;
		width: 78px;
		box-sizing: border-box;
		border-right: 1px solid #bbb;
	}
	.page.active {
		width: 100px;
		border-right: 0;
		border-bottom: 4px solid #117865;
		padding-top: 4px;
	}

	.edge {
		flex: 1;
		display: flex;
		flex-direction: column;
		align-items: center;
		position: relative;
		border-left: 1px solid #e8e8e8;
	}
	.e-search {
		width: 20px;
		height: 20px;
		margin-top: 11px;
	}
	.e-line {
		width: 28px;
		height: 1px;
		background: #cfcfcf;
		margin-top: 22px;
	}
	.e-plus {
		width: 14px;
		height: 14px;
		margin-top: 25px;
	}
	.e-gear {
		width: 18px;
		height: 18px;
		margin-top: auto;
		margin-bottom: 12px;
	}
</style>
